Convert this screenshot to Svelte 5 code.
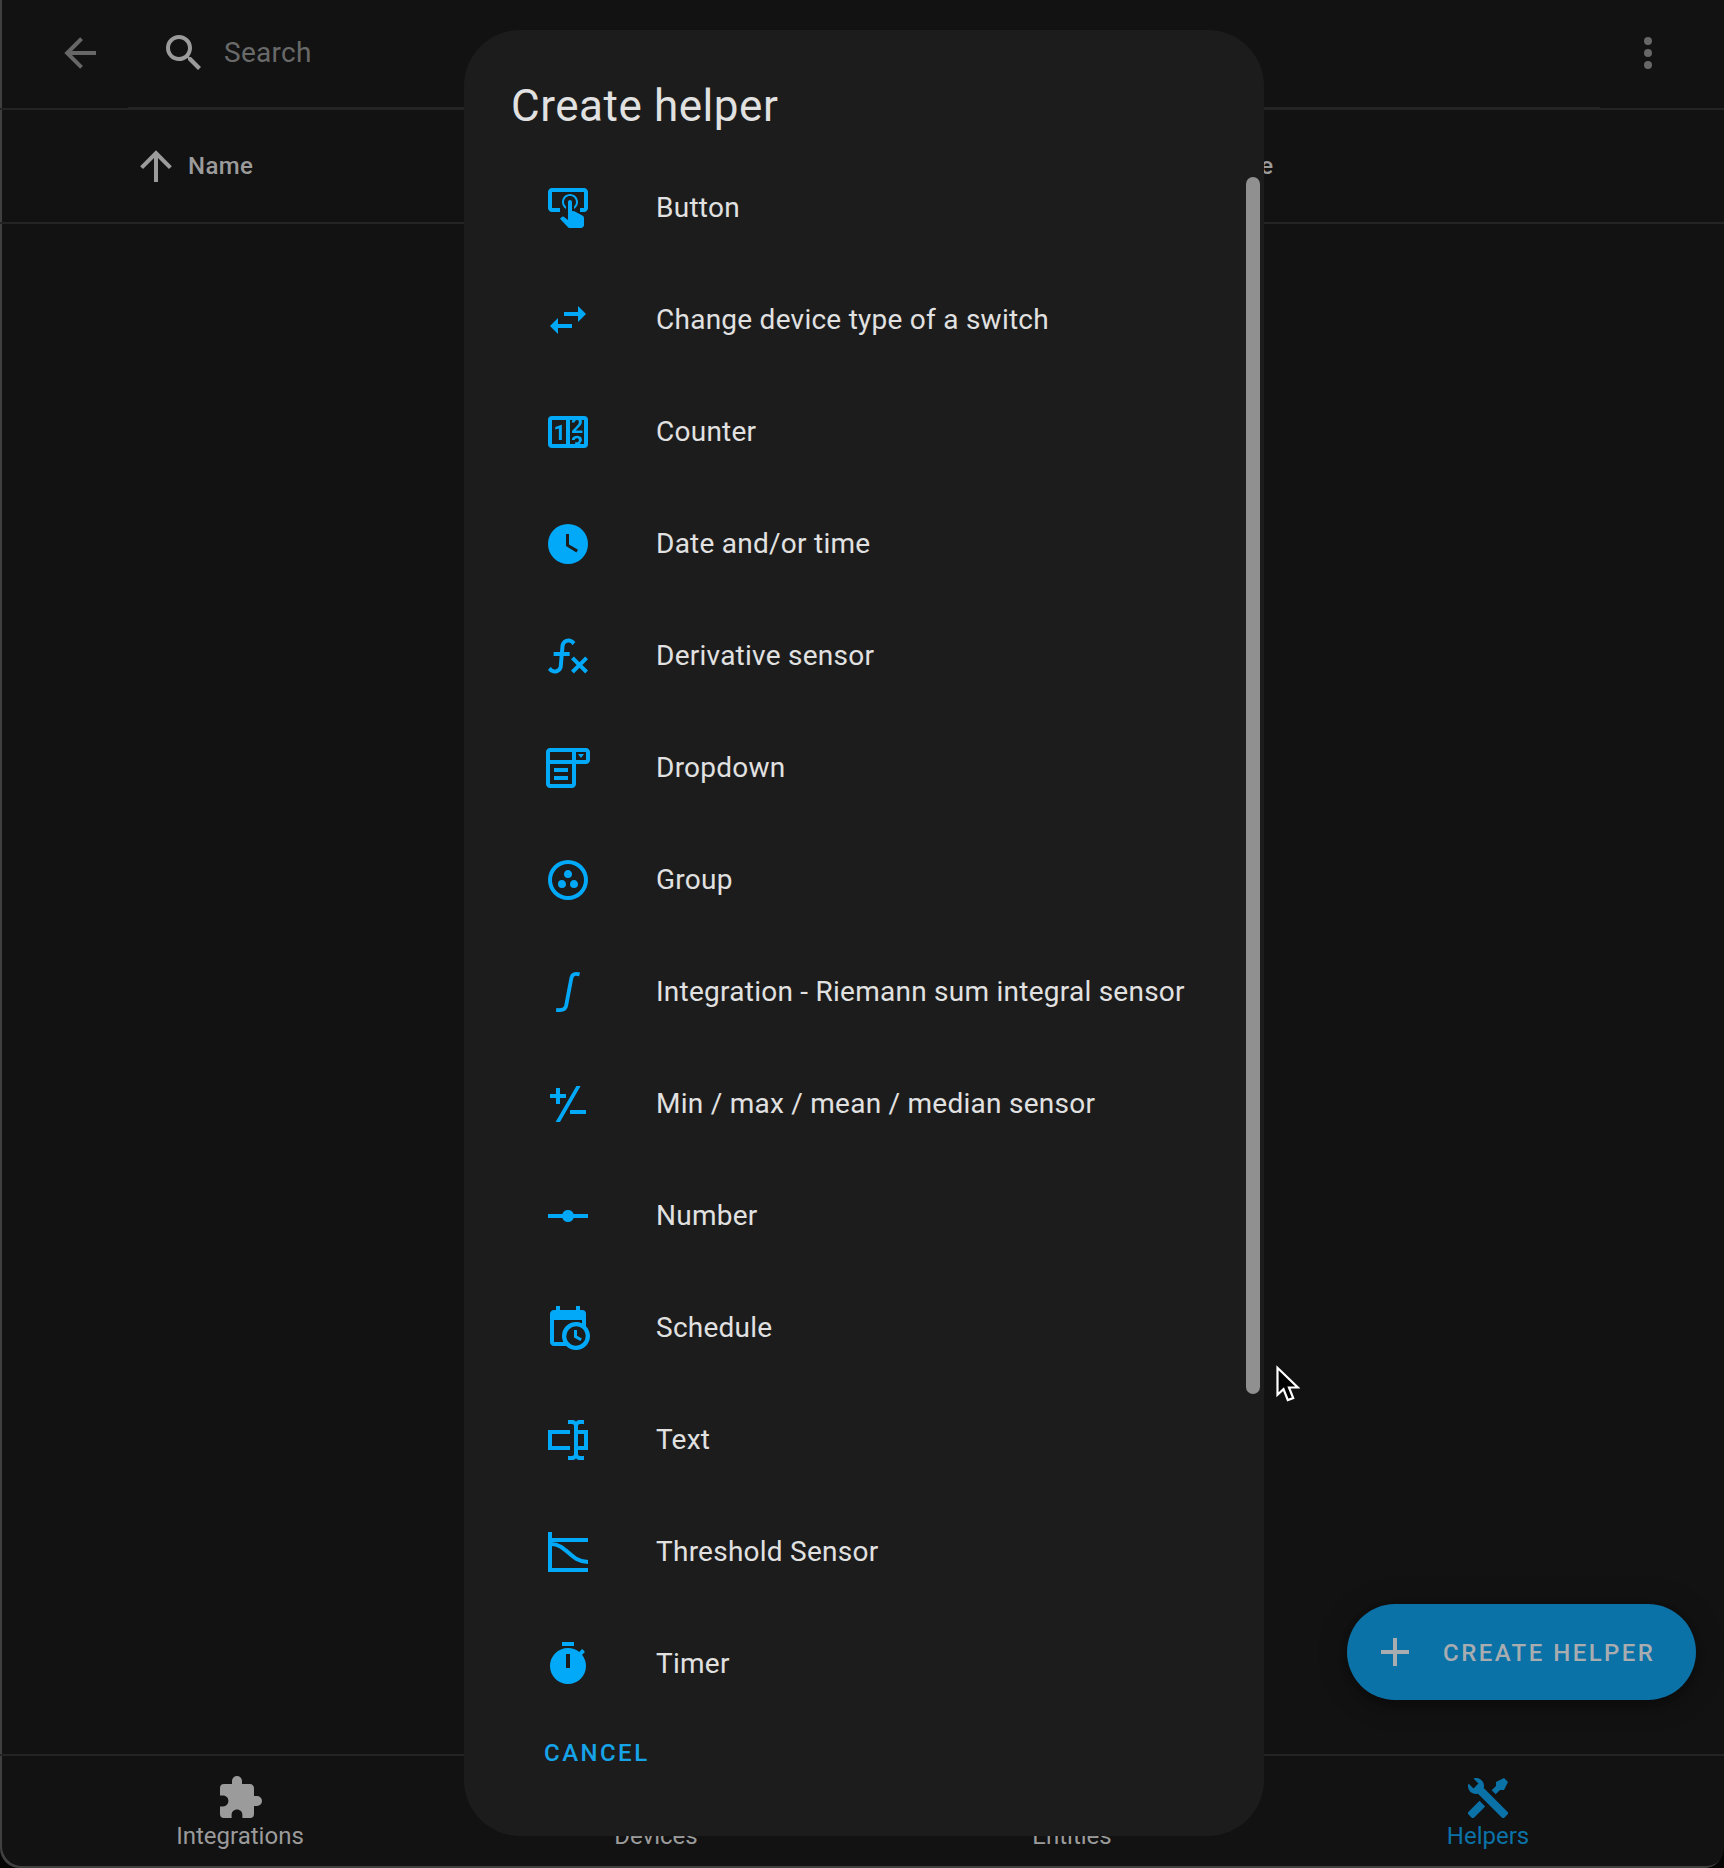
<script>
  const helpers = [
    { label: 'Button', icon: 'M13 5C15.21 5 17 6.79 17 9C17 10.5 16.2 11.77 15 12.46V11.24C15.61 10.69 16 9.89 16 9C16 7.34 14.66 6 13 6S10 7.34 10 9C10 9.89 10.39 10.69 11 11.24V12.46C9.8 11.77 9 10.5 9 9C9 6.79 10.79 5 13 5M20 20.5C19.97 21.32 19.32 21.97 18.5 22H13C12.62 22 12.26 21.85 12 21.57L8 17.37L8.74 16.6C8.93 16.39 9.2 16.28 9.5 16.28H9.7L12 18V9C12 8.45 12.45 8 13 8S14 8.45 14 9V13.47L15.21 13.6L19.15 15.79C19.68 16.03 20 16.56 20 17.14V20.5M20 2H4C2.9 2 2 2.9 2 4V12C2 13.11 2.9 14 4 14H8V12L4 12L4 4H20L20 12H18V14H20V13.97L20.04 14C21.13 14 22 13.09 22 12V4C22 2.9 21.11 2 20 2Z' },
    { label: 'Change device type of a switch', icon: 'M21,9L17,5V8H10V10H17V13M7,11L3,15L7,19V16H14V14H7V11Z' },
    { label: 'Counter', icon: 'M4,4H20A2,2 0 0,1 22,6V18A2,2 0 0,1 20,20H4A2,2 0 0,1 2,18V6A2,2 0 0,1 4,4M4,6V18H11V6H4M20,18V6H18.76C19,6.54 18.95,7.07 18.95,7.13C18.88,7.8 18.41,8.5 18.24,8.75L15.91,11.3L19.23,11.28L19.24,12.5L14.04,12.47L14,11.47C14,11.47 17.05,8.24 17.2,7.95C17.34,7.67 17.91,6 16.5,6C15.27,6.05 15.41,7.3 15.41,7.3L13.87,7.31C13.87,7.31 13.88,6.65 14.25,6H13V18H15.58L15.57,17.14L16.54,17.13C16.54,17.13 17.45,16.97 17.46,16.08C17.5,15.08 16.65,15.08 16.5,15.08C16.37,15.08 15.43,15.13 15.43,15.95H13.91C13.91,15.95 13.95,13.89 16.5,13.89C19.1,13.89 18.96,15.91 18.96,15.91C18.96,15.91 19,17.16 17.85,17.63L18.37,18H20M8.92,16H7.42V10.2L5.62,10.76V9.53L8.76,8.41H8.92V16Z' },
    { label: 'Date and/or time', icon: 'M12,2A10,10 0 0,0 2,12A10,10 0 0,0 12,22A10,10 0 0,0 22,12A10,10 0 0,0 12,2M16.2,16.2L11,13V7H12.5V12.2L17,14.9L16.2,16.2Z' },
    { label: 'Derivative sensor', icon: 'M12.42,5.29C11.32,5.19 10.35,6 10.25,7.11L10,10H12.82V12H9.82L9.38,17.07C9.18,19.27 7.24,20.9 5.04,20.7C3.79,20.59 2.66,19.9 2,18.83L3.5,17.33C3.83,18.38 4.96,18.97 6,18.63C6.78,18.39 7.33,17.7 7.4,16.89L7.82,12H4.82V10H8L8.27,6.93C8.46,4.73 10.39,3.1 12.6,3.28C13.86,3.39 15,4.09 15.66,5.17L14.16,6.67C13.91,5.9 13.23,5.36 12.42,5.29M22,13.65L20.59,12.24L17.76,15.07L14.93,12.24L13.5,13.65L16.35,16.5L13.5,19.31L14.93,20.72L17.76,17.89L20.59,20.72L22,19.31L19.17,16.5L22,13.65Z' },
    { label: 'Dropdown', icon: 'M17 5H20L18.5 7L17 5M3 2H21C22.11 2 23 2.9 23 4V8C23 9.11 22.11 10 21 10H16V20C16 21.11 15.11 22 14 22H3C1.9 22 1 21.11 1 20V4C1 2.9 1.9 2 3 2M3 4V8H14V4H3M21 8V4H16V8H21M3 20H14V10H3V20M5 12H12V14H5V12M5 16H12V18H5V16Z' },
    { label: 'Group', icon: 'M15,12C13.89,12 13,12.89 13,14A2,2 0 0,0 15,16A2,2 0 0,0 17,14C17,12.89 16.1,12 15,12M12,20A8,8 0 0,1 4,12A8,8 0 0,1 12,4A8,8 0 0,1 20,12A8,8 0 0,1 12,20M12,2A10,10 0 0,0 2,12A10,10 0 0,0 12,22A10,10 0 0,0 22,12A10,10 0 0,0 12,2M14,9C14,7.89 13.1,7 12,7C10.89,7 10,7.89 10,9A2,2 0 0,0 12,11A2,2 0 0,0 14,9M9,12A2,2 0 0,0 7,14A2,2 0 0,0 9,16A2,2 0 0,0 11,14C11,12.89 10.1,12 9,12Z' },
    { label: 'Integration - Riemann sum integral sensor', stroke: 'M17.8 3.2C15.6 2.6 14.2 2.9 13.7 5L11.1 18.7C10.6 20.9 9.2 21.3 6.1 21', strokeWidth: 1.9 },
    { label: 'Min / max / mean / median sensor', icon: 'M6 4H8V7H11V9H8V12H6V9H3V7H6ZM13 15H21V17H13ZM16.2 3H18.3L8 21H5.8Z' },
    { label: 'Number', icon: 'M2 11H9.17A3 3 0 0 1 14.83 11H22V13H14.83A3 3 0 0 1 9.17 13H2Z' },
    { label: 'Schedule', icon: 'M15,13H16.5V15.82L18.94,17.23L18.19,18.53L15,16.69V13M19,8H5V19H9.67C9.24,18.09 9,17.07 9,16A7,7 0 0,1 16,9C17.07,9 18.09,9.24 19,9.67V8M5,21C3.89,21 3,20.1 3,19V5C3,3.89 3.89,3 5,3H6V1H8V3H16V1H18V3H19A2,2 0 0,1 21,5V11.1C22.24,12.36 23,14.09 23,16A7,7 0 0,1 16,23C14.09,23 12.36,22.24 11.1,21H5M16,11.15A4.85,4.85 0 0,0 11.15,16C11.15,18.68 13.32,20.85 16,20.85A4.85,4.85 0 0,0 20.85,16C20.85,13.32 18.68,11.15 16,11.15Z' },
    { label: 'Text', icon: 'M17,7H22V17H17V19A1,1 0 0,0 18,20H20V22H17.5C16.95,22 16,21.55 16,21C16,21.55 15.05,22 14.5,22H12V20H14A1,1 0 0,0 15,19V5A1,1 0 0,0 14,4H12V2H14.5C15.05,2 16,2.45 16,3C16,2.45 16.95,2 17.5,2H20V4H18A1,1 0 0,0 17,5V7M2,7H13V9H4V15H13V17H2V7M20,15V9H17V15H20Z' },
    { label: 'Threshold Sensor', icon: 'M2 2H4V5H22V7H4V20H22V22H2Z', stroke: 'M3.5 8C11.5 8 13 17 22 17', strokeWidth: 2 },
    { label: 'Timer', icon: 'M19.03 7.39L20.45 5.97C20 5.46 19.55 5 19.04 4.56L17.62 6C16.07 4.74 14.12 4 12 4C7.03 4 3 8.03 3 13S7.02 22 12 22C17 22 21 17.97 21 13C21 10.88 20.26 8.93 19.03 7.39M13 14H11V7H13V14M15 1H9V3H15V1Z' },
  ];

  const tabs = [
    { label: 'Integrations', icon: 'M20.5,11H19V7C19,5.89 18.1,5 17,5H13V3.5A2.5,2.5 0 0,0 10.5,1A2.5,2.5 0 0,0 8,3.5V5H4A2,2 0 0,0 2,7V10.8H3.5C5,10.8 6.2,12 6.2,13.5C6.2,15 5,16.2 3.5,16.2H2V20A2,2 0 0,0 4,22H7.8V20.5C7.8,19 9,17.8 10.5,17.8C12,17.8 13.2,19 13.2,20.5V22H17A2,2 0 0,0 19,20V16H20.5A2.5,2.5 0 0,0 23,13.5A2.5,2.5 0 0,0 20.5,11Z' },
    { label: 'Devices', icon: 'M3 6H21V4H3A2 2 0 0 0 1 6V18A2 2 0 0 0 3 20H7V18H3Z' },
    { label: 'Entities', icon: 'M4 4H10V10H4ZM14 4H20V10H14ZM4 14H10V20H4ZM14 14H20V20H14Z' },
    { label: 'Helpers', active: true, icon: 'M21.71 20.29L20.29 21.71A1 1 0 0 1 18.88 21.71L7 9.85A3.81 3.81 0 0 1 6 10A4 4 0 0 1 2.22 4.7L4.76 7.24L5.29 6.71L6.71 5.29L7.24 4.76L4.7 2.22A4 4 0 0 1 10 6A3.81 3.81 0 0 1 9.85 7L21.71 18.88A1 1 0 0 1 21.71 20.29M2.29 18.88A1 1 0 0 0 2.29 20.29L3.71 21.71A1 1 0 0 0 5.12 21.71L10.59 16.25L7.76 13.42M20 2L16 4V6L13.83 8.17L15.83 10.17L18 8H20L22 4Z' },
  ];
</script>

{#snippet icon(d)}
  <svg class="icon" viewBox="0 0 24 24" aria-hidden="true"><path {d} /></svg>
{/snippet}

<div class="window">
  <header class="toolbar">
    <span class="muted back">{@render icon('M20,11V13H8L13.5,18.5L12.08,19.92L4.16,12L12.08,4.08L13.5,5.5L8,11H20Z')}</span>
    <div class="search">
      {@render icon('M9.5,3A6.5,6.5 0 0,1 16,9.5C16,11.11 15.41,12.59 14.44,13.73L14.71,14H15.5L20.5,19L19,20.5L14,15.5V14.71L13.73,14.44C12.59,15.41 11.11,16 9.5,16A6.5,6.5 0 0,1 3,9.5A6.5,6.5 0 0,1 9.5,3M9.5,5C7,5 5,7 5,9.5C5,12 7,14 9.5,14C12,14 14,12 14,9.5C14,7 12,5 9.5,5Z')}
      <span class="placeholder">Search</span>
    </div>
    <span class="muted">{@render icon('M12,16A2,2 0 0,1 14,18A2,2 0 0,1 12,20A2,2 0 0,1 10,18A2,2 0 0,1 12,16M12,10A2,2 0 0,1 14,12A2,2 0 0,1 12,14A2,2 0 0,1 10,12A2,2 0 0,1 12,10M12,4A2,2 0 0,1 14,6A2,2 0 0,1 12,8A2,2 0 0,1 10,6A2,2 0 0,1 12,4Z')}</span>
  </header>

  <div class="columns">
    <div class="column name">
      {@render icon('M13,20H11V8L5.5,13.5L4.08,12.08L12,4.16L19.92,12.08L18.5,13.5L13,8V20Z')}
      <span>Name</span>
    </div>
    <div class="column">Type</div>
  </div>

  <main class="content">
    <button class="fab">
      {@render icon('M19,13H13V19H11V13H5V11H11V5H13V11H19V13Z')}
      <span>CREATE HELPER</span>
    </button>
  </main>

  <nav class="tabs">
    {#each tabs as tab}
      <div class="tab" class:active={tab.active}>
        {@render icon(tab.icon)}
        <span>{tab.label}</span>
      </div>
    {/each}
  </nav>

  <section class="dialog">
    <h2>Create helper</h2>
    <ul>
      {#each helpers as item}
        <li>
          <svg class="icon" viewBox="0 0 24 24" aria-hidden="true">
            {#if item.icon}<path d={item.icon} />{/if}
            {#if item.stroke}
              <path class="line" d={item.stroke} stroke-width={item.strokeWidth} />
            {/if}
          </svg>
          <span>{item.label}</span>
        </li>
      {/each}
    </ul>
    <div class="actions"><button>CANCEL</button></div>
    <div class="scrollbar"></div>
  </section>

  <svg class="cursor" viewBox="0 0 24 38" aria-hidden="true">
    <path d="M1.5 2.8V29.8L7.5 24.2L11.8 35L17.2 33L13 22.5H21.8Z" />
  </svg>
</div>

<style>
  :global(body) {
    background: #050505;
  }

  .window {
    position: relative;
    box-sizing: border-box;
    width: 1724px;
    height: 1868px;
    display: flex;
    flex-direction: column;
    overflow: hidden;
    background: #121212;
    box-shadow: inset 2px -2px 0 #404040;
    border-radius: 0 0 20px 20px;
    color: #9b9b9b;
    font-family: Roboto, "Liberation Sans", sans-serif;
  }

  .icon {
    display: block;
    flex: none;
    width: 48px;
    height: 48px;
    fill: currentColor;
  }

  .line {
    fill: none;
    stroke: currentColor;
  }

  button {
    border: 0;
    padding: 0;
    background: none;
    color: inherit;
    font: inherit;
  }

  .toolbar {
    box-sizing: border-box;
    height: 110px;
    display: flex;
    padding-left: 56px;
    border-bottom: 2px solid #242424;
  }

  .muted {
    flex: none;
    display: flex;
    align-items: center;
    height: 106px;
    color: #676767;
  }

  .back {
    width: 72px;
  }

  .search {
    box-sizing: border-box;
    flex: none;
    width: 1472px;
    margin-right: 24px;
    height: 108px;
    padding: 0 0 1px 32px;
    display: flex;
    align-items: center;
    gap: 16px;
    border-bottom: 1px solid #242424;
  }

  .placeholder {
    padding-bottom: 2px;
    color: #696969;
    font-size: 28px;
    letter-spacing: 0.26px;
  }

  .columns {
    box-sizing: border-box;
    height: 114px;
    display: flex;
    align-items: center;
    padding-left: 132px;
    border-bottom: 2px solid #242424;
    font-size: 24px;
    font-weight: 500;
    letter-spacing: 0.4px;
  }

  .column {
    display: flex;
    align-items: center;
  }

  .name {
    width: 1088px;
    gap: 8px;
  }

  .content {
    flex: 1;
    display: flex;
    align-items: flex-end;
    justify-content: flex-end;
    padding: 0 28px 54px 0;
  }

  .fab {
    box-sizing: border-box;
    width: 349px;
    height: 96px;
    display: flex;
    align-items: center;
    gap: 24px;
    padding-left: 24px;
    border-radius: 48px;
    background: #0b72a8;
    box-shadow: 0 6px 10px rgb(0 0 0 / 25%), 0 2px 32px rgb(0 0 0 / 20%);
    color: #a9adb0;
    font-size: 24px;
    font-weight: 500;
    letter-spacing: 2.46px;
    white-space: nowrap;
  }

  .fab span {
    padding-top: 2px;
  }

  .tabs {
    box-sizing: border-box;
    height: 114px;
    display: flex;
    padding: 18px 28px 0 32px;
    border-top: 2px solid #242424;
    font-size: 24px;
    line-height: 28px;
  }

  .tab {
    flex: none;
    width: 416px;
    display: flex;
    flex-direction: column;
    align-items: center;
  }

  .active {
    color: #0b72a8;
  }

  .dialog {
    position: absolute;
    left: 464px;
    top: 30px;
    width: 800px;
    height: 1806px;
    border-radius: 56px;
    background: #1c1c1c;
    color: #e1e1e1;
  }

  h2 {
    margin: 0;
    padding: 44px 0 14px 47px;
    font-size: 44px;
    line-height: 64px;
    font-weight: 400;
    letter-spacing: 0.55px;
  }

  ul {
    margin: 0;
    padding: 0;
    list-style: none;
  }

  li {
    height: 112px;
    display: flex;
    align-items: center;
    gap: 64px;
    padding-left: 80px;
    font-size: 28px;
    letter-spacing: 0.25px;
    white-space: nowrap;
  }

  li span {
    padding-bottom: 2px;
  }

  li .icon {
    color: #03a9f9;
  }

  .actions {
    height: 66px;
    display: flex;
    align-items: center;
    padding-left: 80px;
    color: #16a3e8;
    font-size: 24px;
    font-weight: 500;
  }

  .actions button {
    letter-spacing: 2.46px;
  }

  .scrollbar {
    position: absolute;
    left: 782px;
    top: 147px;
    width: 14px;
    height: 1217px;
    border-radius: 7px;
    background: #909090;
  }

  .cursor {
    position: absolute;
    left: 1276px;
    top: 1365px;
    width: 24px;
    height: 38px;
    fill: #000;
    stroke: #fff;
    stroke-width: 2.2;
  }
</style>
